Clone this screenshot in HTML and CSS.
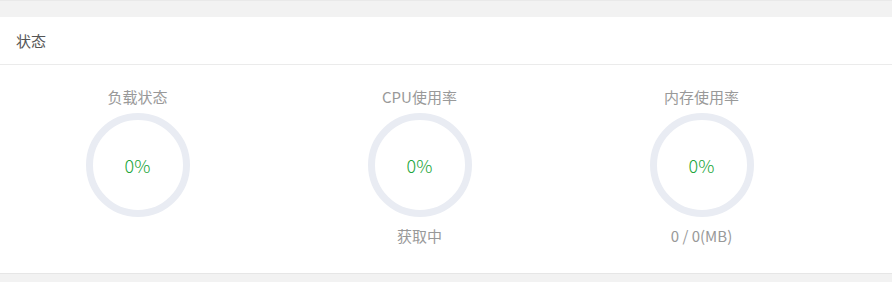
FILE: index.html
```html
<!DOCTYPE html>
<html lang="zh">
	<head>
		<meta charset="UTF-8">
		<title>状态</title>
		<link rel="stylesheet" href="styles.css">
	</head>
	<body>
		<div class="page">
			<div class="card">
				<div class="card-header">状态</div>
				<div class="card-body">
					<div class="gauge">
						<p class="gauge-title">负载状态</p>
						<div class="ring"><span>0%</span></div>
						<p class="gauge-info"></p>
					</div>
					<div class="gauge">
						<p class="gauge-title">CPU使用率</p>
						<div class="ring"><span>0%</span></div>
						<p class="gauge-info">获取中</p>
					</div>
					<div class="gauge">
						<p class="gauge-title">内存使用率</p>
						<div class="ring"><span>0%</span></div>
						<p class="gauge-info">0 / 0(MB)</p>
					</div>
				</div>
			</div>
		</div>
	</body>
</html>
```

FILE: styles.css
```css
*{
	margin: 0;
	padding: 0;
	box-sizing: border-box;
}
body{
	height: 282px;
	overflow: hidden;
	background-color: #f2f2f2;
	font-family: "Noto Sans CJK SC", "Liberation Sans", sans-serif;
	border-top: 1px solid #e9e9e9;
}
.page{
	padding-top: 16px;
}
.card{
	background-color: #fff;
	border-bottom: 1px solid #e6e6e6;
}
.card-header{
	height: 48px;
	padding-left: 16px;
	line-height: 47px;
	font-size: 15px;
	color: #555;
	border-bottom: 1px solid #ebebeb;
}
.card-body{
	display: grid;
	grid-template-columns: repeat(3, 275px);
	column-gap: 7px;
	padding: 22px 0 27px;
}
.gauge{
	display: flex;
	flex-direction: column;
	align-items: center;
}
.gauge-title{
	height: 20px;
	line-height: 20px;
	font-size: 15px;
	color: #999;
	margin-bottom: 6px;
}
.ring{
	display: flex;
	align-items: center;
	justify-content: center;
	width: 104px;
	height: 104px;
	border: 7px solid #e9ecf3;
	border-radius: 50%;
}
.ring span{
	font-size: 18px;
	font-weight: 300;
	color: #20a53a;
}
.gauge-info{
	height: 20px;
	margin-top: 9px;
	line-height: 20px;
	font-size: 15px;
	color: #999;
}
```
